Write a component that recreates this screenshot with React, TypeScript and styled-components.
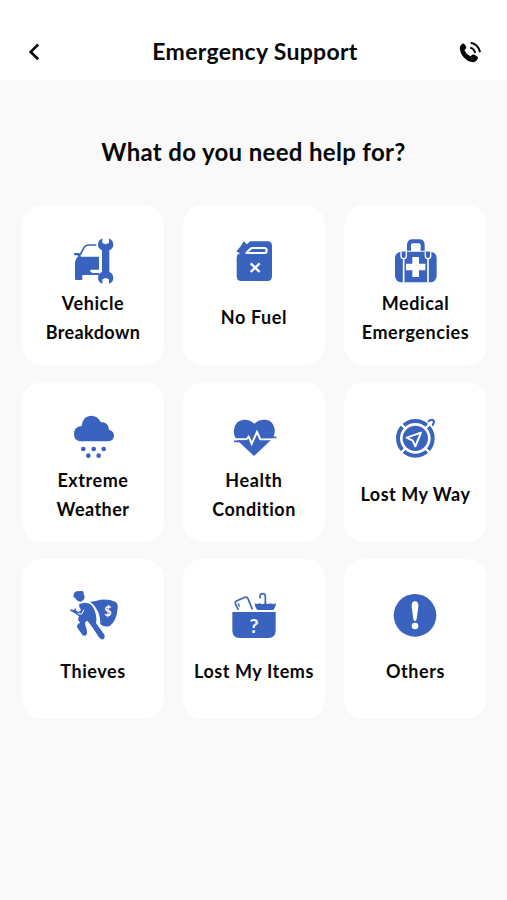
import React from "react";
import styled, { createGlobalStyle } from "styled-components";

const BLUE = "#3963bf";

const GlobalStyle = createGlobalStyle`
  * { box-sizing: border-box; }
  body { margin: 0; background: #f9f9f9; }
`;

const Screen = styled.div`
  width: 100%;
  min-height: 900px;
  background: #f9f9f9;
  color: #080808;
  font-family: Lato, "Open Sans", sans-serif;
  font-weight: 700;
`;

const Header = styled.header`
  height: 80px;
  padding: 24px 23px 0 26px;
  display: grid;
  grid-template-columns: 30px 1fr 30px;
  align-items: center;
  background: #fff;
`;

const IconButton = styled.button`
  height: 30px;
  padding: 0;
  border: 0;
  background: none;
  color: #080808;
  display: flex;
  svg { display: block; }
`;

const Title = styled.h1<{ $spacing: number }>`
  margin: 0;
  padding-bottom: 2px;
  text-align: center;
  font-size: 23px;
  line-height: 30px;
  font-weight: 700;
  letter-spacing: ${(p) => p.$spacing}px;
  white-space: nowrap;
`;

const Question = styled.h2<{ $spacing: number }>`
  margin: 0;
  padding-top: 57px;
  height: 125px;
  text-align: center;
  font-size: 24px;
  line-height: 30px;
  font-weight: 700;
  letter-spacing: ${(p) => p.$spacing}px;
`;

const Grid = styled.main`
  display: grid;
  grid-template-columns: 142px 142px 143px;
  grid-auto-rows: 160px;
  column-gap: 19px;
  row-gap: 17px;
  padding-left: 22px;
`;

const Card = styled.button`
  padding: 25px 0 0;
  border: 0;
  border-radius: 20px;
  background: #fff;
  color: inherit;
  font: inherit;
  display: flex;
  flex-direction: column;
  align-items: center;
`;

const CardIcon = styled.svg`
  width: 65px;
  height: 60px;
  flex: none;
  fill: ${BLUE};
`;

const Label = styled.span`
  height: 55px;
  display: flex;
  flex-direction: column;
  justify-content: center;
`;

const Line = styled.span<{ $spacing: number }>`
  font-size: 18px;
  line-height: 28.5px;
  white-space: nowrap;
  letter-spacing: ${(p) => p.$spacing}px;
`;

const Glyph = styled.text`
  font-family: Lato, sans-serif;
  font-weight: 700;
  text-anchor: middle;
  fill: #fff;
`;

const white = { fill: "none", stroke: "#fff" } as const;
const blue = { fill: "none", stroke: BLUE } as const;

const Vehicle = (
  <>
    <path d="M106 45H83Q74 45 69 53L57 75" {...blue} strokeWidth="5" />
    <path d="M40 69H55L60 80H114V119H88V126H92V129H114V135H64V147Q64 150 61 150H45Q42 150 42 147V101Q42 88 52 79L49 76H42Q39 76 39 72Z" />
    <path d="M124 25V39L134 43L144 39V25Q157 31 157 45Q157 55 145 61V125Q157 131 157 143Q157 156 144 161V148L134 144L124 148V161Q111 156 111 143Q111 131 123 125V61Q111 55 111 44Q111 31 124 25Z" />
  </>
);

const Fuel = (
  <>
    <path d="M65 34L75 43L84 34H137Q150 34 150 48V139Q150 153 137 153H58Q44 153 44 139V85Q44 75 51 68L43 64L56 49Z" />
    <path d="M44 67L53 72" {...white} strokeWidth="3" />
    <path d="M73 69L85 57Q88 54 92 54H127Q134 54 134 62Q134 69 127 69Z" {...white} strokeWidth="6" strokeLinejoin="round" />
    <path d="M86 100L113 126M113 100L86 126" {...white} strokeWidth="7" />
  </>
);

const Medical = (
  <>
    <path d="M78 62V45Q78 34 89 34H109Q119 34 119 45V62" {...blue} strokeWidth="12" />
    <rect x="36" y="65" width="125" height="92" rx="19" />
    <path d="M62 66V157M135 66V157" {...white} strokeWidth="5" />
    <path d="M54 65V78Q54 86 62 86Q70 86 70 78V65M127 65V78Q127 86 135 86Q143 86 143 78V65" fill={BLUE} stroke="#fff" strokeWidth="4" />
    <path d="M88 81H108V101H127V121H108V141H88V121H69V101H88Z" fill="#fff" />
  </>
);

const Weather = (
  <>
    <path d="M57 109Q39 107 39 87Q39 65 62 63Q66 32 91 32Q109 32 119 51Q143 51 144 74Q159 78 159 93Q158 107 142 109Z" />
    {[[67, 132], [98, 132], [128, 132], [82, 152], [113, 152]].map(([x, y]) => (
      <circle key={`${x}-${y}`} cx={x} cy={y} r="7" />
    ))}
  </>
);

const Health = (
  <>
    <path d="M96 153L44 104Q33 91 36 74Q40 46 65 44Q84 43 97 56Q110 43 130 44Q154 46 158 72Q160 91 148 104Z" />
    <path d="M32 103H74L80 95L89 116L105 81L115 103H166" {...white} strokeWidth="6" />
    <path d="M36 109H75L80 104M117 97H163" {...blue} strokeWidth="5" />
  </>
);

const Compass = (
  <>
    <circle cx="97" cy="100" r="52" {...blue} strokeWidth="12" />
    <path d="M52 55L68 71M127 70L146 51M52 145L68 129M127 130L144 147" {...white} strokeWidth="7" />
    <circle cx="97" cy="100" r="38" />
    <path d="M114 83L71 98L89 107L97 124Z" {...white} strokeWidth="6" strokeLinejoin="round" />
    <path d="M137 49Q143 42 149 45Q155 48 152 54L149 60" {...blue} strokeWidth="6" strokeLinecap="round" />
  </>
);

const Thief = (
  <>
    <path d="M39 27L46 22L64 21Q69 22 68 30L71 38Q70 50 58 53Q47 52 43 43L37 38Z" />
    <path d="M88 53Q105 52 118 47Q143 44 163 53Q172 58 170 73Q167 111 147 125Q133 132 118 121Q119 78 88 53Z" />
    <path d="M54 61Q75 51 91 63Q103 76 106 101Q107 113 105 117L129 151Q134 159 127 166Q119 168 114 160L92 127L79 110Q70 113 73 123Q79 139 78 149Q75 158 65 154L48 130Q47 120 58 116Q47 109 54 97L39 86L28 80V76L43 79L54 84L60 78Q53 69 54 61Z" />
    <path d="M42 74L43 82" {...blue} strokeWidth="5" />
    <path d="M69 77L62 90L50 89" {...white} strokeWidth="3" />
    <Glyph x="141" y="97" fontSize="38">$</Glyph>
  </>
);

const Items = (
  <>
    <path d="M31 84H161V139Q161 162 139 162H53Q31 162 31 139Z" />
    <path d="M49 78L40 59Q38 54 43 51L69 40Q75 38 78 44L91 76" {...blue} strokeWidth="5" />
    <path d="M48 58L53 68" {...blue} strokeWidth="4" />
    <path d="M98 58Q105 61 112 58Q121 63 130 58Q138 62 145 58Q154 62 162 58Q161 70 154 78H106Q98 69 98 58Z" />
    <path d="M130 61V37Q130 29 122 29Q114 29 114 37V41" {...blue} strokeWidth="5" strokeLinecap="round" />
    <Glyph x="96" y="147" fontSize="59">?</Glyph>
  </>
);

const Other = (
  <>
    <circle cx="96" cy="94" r="64" />
    <path d="M96 52Q107 52 106 68L101 105Q100 111 96 111Q92 111 91 105L86 68Q85 52 96 52Z" fill="#fff" />
    <circle cx="96" cy="126" r="10" fill="#fff" />
  </>
);

type Topic = { lines: [string, number][]; icon: React.ReactNode; top?: number };

const topics: Topic[] = [
  { lines: [["Vehicle", 0.6], ["Breakdown", 0.4]], icon: Vehicle },
  { lines: [["No Fuel", 0.6]], icon: Fuel },
  { lines: [["Medical", 0.6], ["Emergencies", 0.55]], icon: Medical },
  { lines: [["Extreme", 0.55], ["Weather", 0.45]], icon: Weather, top: 6 },
  { lines: [["Health", 0.6], ["Condition", 0.55]], icon: Health, top: 6 },
  { lines: [["Lost My Way", 0.5]], icon: Compass, top: 6 },
  { lines: [["Thieves", 0.55]], icon: Thief },
  { lines: [["Lost My Items", 0.55]], icon: Items },
  { lines: [["Others", 0.6]], icon: Other },
];

export default function App() {
  return (
    <Screen>
      <GlobalStyle />
      <Header>
        <IconButton aria-label="Back">
          <svg width="30" height="30" viewBox="0 0 30 30" fill="none" stroke="currentColor" strokeWidth="2.6">
            <path d="M12.2 7.5L4.7 14.9L12.2 22.3" />
          </svg>
        </IconButton>
        <Title $spacing={0.3}>Emergency Support</Title>
        <IconButton aria-label="Call">
          <svg width="30" height="30" viewBox="0 0 30 30" fill="currentColor">
            <path d="M9.8 6.4C11.1 7.5 12.8 9.5 12.1 11.2L10.5 13.1C11.5 15.8 13.8 18.1 16.5 19.2L18.4 17.6C20.1 16.9 23.2 19.2 24 20.6C24.3 22 22 24.9 19.5 25.2C12.5 25.4 5.6 17.5 5.8 10.5C6.1 8.5 8 6.3 9.8 6.4Z" />
            <path d="M16.2 10.8Q20.3 11.5 21.1 16M16.7 5.7Q24.5 7.2 26.1 15.3" fill="none" stroke="currentColor" strokeWidth="2" />
          </svg>
        </IconButton>
      </Header>
      <Question $spacing={0.33}>What do you need help for?</Question>
      <Grid>
        {topics.map(({ lines, icon, top = 0 }) => (
          <Card key={lines[0][0]}>
            <CardIcon viewBox={`0 ${top} 195 180`} aria-hidden="true">{icon}</CardIcon>
            <Label>
              {lines.map(([text, spacing]) => (
                <Line key={text} $spacing={spacing}>{text}</Line>
              ))}
            </Label>
          </Card>
        ))}
      </Grid>
    </Screen>
  );
}
